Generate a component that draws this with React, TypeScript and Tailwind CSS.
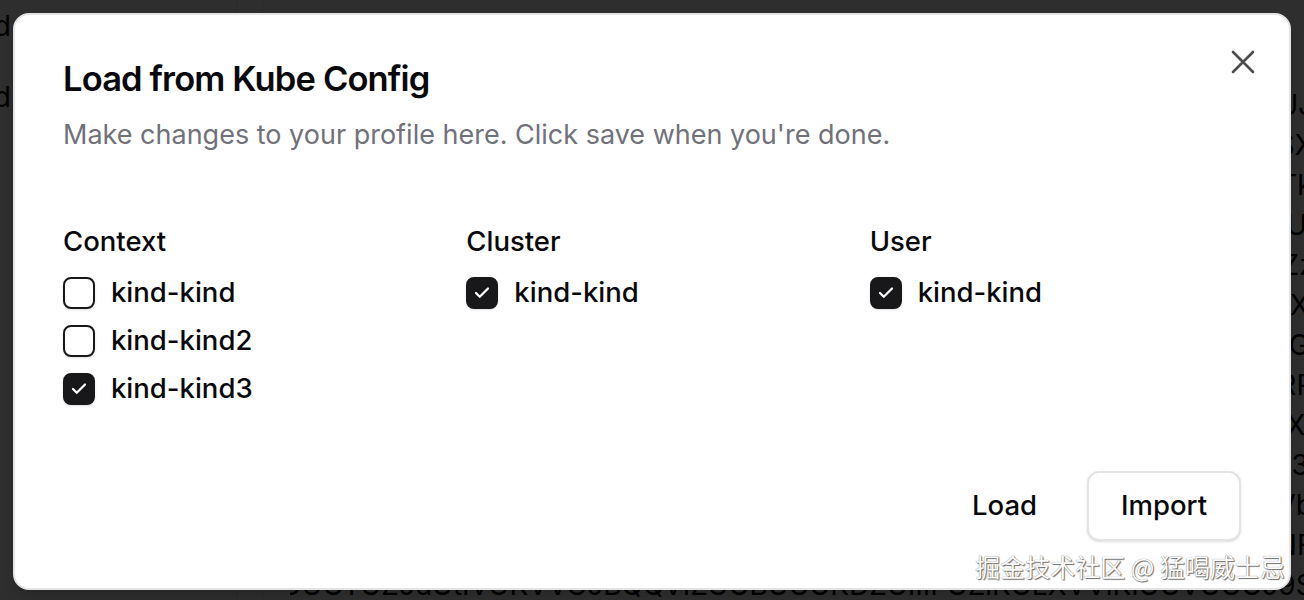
import React from "react"

const bgLines = [
  "LS0tLS1CRUdJTiBDRVJUSUZJQ0FURS0tLS0tCk1JSUMvakNDQWVhZ0F3SUJBZ0lCUJa",
  "QURBTkJna3Foa2lHOXcwQkFRc0ZBREFWTVJNd0VRWURWUVFERXdwcmRXSmxSXq",
  "Y201bGRHVnpNQjRYRFRJME1ERXhNREV5TURBd01sb1hEVE0wTURFd056RXlNTk8",
  "SUhqQ0NBU0l3RFFZSktvWklodmNOQVFFQkJRQURnZ0VQQURDQ0FRb0NnZ0VCQUEUw",
  "MEZFSUhMaGZ4WDNpOThtaXRGMGJsQ2tCdnd5MnBxNTQ5b1NPd2xMQ3F4cEZSZzk",
  "b3JHRzlrZ0pXL1lMeUZQbFhXM1pqbjZ6S0VHZ2NPNFZ0V2twT1h5bHNTM0o2UXU",
  "aVRvTjdiNUhmbTBJR1Bwa2RHN1ZmdHN3R2xxWWdtRDJPUXhZT05ETHVRT1l6WGC",
  "Q0ZKcnhUcFkyRXpmVk1IbGNhQXRSTXVxOERFS2RXdFNwQVpjV3pYYlR3bE9GWkRRa",
  "YjB0OG5aV1dHZWtTbk1XNkpEU0FJUEdxY1FEU1lwRzVtUFN3UEN5OUp6R2xRaXm",
  "dFZQMm95ZkV3K3BLbVR1RUp1N3dLUjZ5V0VQZ01VYU01QUdlM2NYTHZ3WW1vN3N",
  "N2hIeGJvTENDK2FjWmpFT0x4cTRIZ2ZGc2FXOGJEbWJzQjNIZ0d6bDJYWnhyVmVbd",
  "RUUrOHYxYlFQSDJ3TnNFb2pZQ0RYMWN4L0pmOEt0ZVBZR0Y5dHpEM1R2UlVkNFF",
  "UPDTOUGTUZJdUtIVOKVVGJBQQVIZUUBUUUKDZUIIIFUZlKULXVVlKIUUVUUUJ9Se",
]

function CheckIcon() {
  return (
    <svg width="18" height="18" viewBox="0 0 24 24" fill="none" stroke="currentColor" strokeWidth="3" strokeLinecap="round" strokeLinejoin="round">
      <path d="M20 6 9 17l-5-5" />
    </svg>
  )
}

function CheckRow({ label, checked }: { label: string; checked?: boolean }) {
  return (
    <div className="flex h-8 items-center gap-4">
      <div
        className={`flex h-8 w-8 shrink-0 items-center justify-center rounded-lg border-2 border-[#18181b] shadow-sm ${
          checked ? "bg-[#18181b] text-white" : "bg-white"
        }`}
      >
        {checked && <CheckIcon />}
      </div>
      <span className="text-[27.5px] font-medium leading-none text-[#09090b]">{label}</span>
    </div>
  )
}

function Column({ title, items }: { title: string; items: { label: string; checked?: boolean }[] }) {
  return (
    <div className="flex flex-col">
      <div className="text-[27.5px] font-medium leading-[28px] text-[#09090b]">{title}</div>
      <div className="mt-[22px] flex flex-col gap-4">
        {items.map((it) => (
          <CheckRow key={it.label} label={it.label} checked={it.checked} />
        ))}
      </div>
    </div>
  )
}

export default function App() {
  return (
    <div className="relative h-[600px] w-[1304px] overflow-hidden bg-white font-['Inter','Noto_Sans',sans-serif]">
      {/* page behind the dialog */}
      <div className="flex h-full">
        <aside className="flex w-[237px] shrink-0 flex-col gap-[31px] border-r border-gray-200 pt-[6px]">
          <div className="ml-[-45px] text-[28px] leading-[40px] text-black">kind</div>
          <div className="ml-[-45px] text-[28px] leading-[40px] text-black">kind</div>
        </aside>
        <div className="w-[26px] shrink-0 border-r border-gray-200" />
        <main className="min-w-0 flex-1">
          <div className="ml-[27px] mr-[-26px] flex flex-col pt-[85px]">
            {bgLines.map((l, i) => (
              <div key={i} className="flex justify-end overflow-hidden whitespace-nowrap text-[28px] leading-[40px] text-black">
                <span>{l}</span>
              </div>
            ))}
          </div>
        </main>
      </div>

      {/* overlay */}
      <div className="absolute inset-0 bg-black/[0.82]" />

      {/* dialog */}
      <div className="absolute left-[13px] top-[13px] w-[1278px] rounded-2xl border-2 border-[#e4e4e7] bg-white px-12 pb-[47px] pt-[46px] shadow-lg">
        <button className="absolute right-[30px] top-[31px] flex h-8 w-8 items-center justify-center text-black/70">
          <svg width="32" height="32" viewBox="0 0 32 32" fill="none" stroke="currentColor" strokeWidth="2.6" strokeLinecap="round">
            <path d="M6 6 26 26M26 6 6 26" />
          </svg>
        </button>

        <div className="flex flex-col">
          <h2 className="text-[34.5px] font-semibold leading-9 tracking-tight text-[#09090b]">Load from Kube Config</h2>
          <p className="mt-[18px] text-[27px] leading-[40px] text-[#71717a]">
            Make changes to your profile here. Click save when you're done.
          </p>
        </div>

        <div className="mt-[72px] grid grid-cols-3 gap-x-8">
          <Column
            title="Context"
            items={[
              { label: "kind-kind" },
              { label: "kind-kind2" },
              { label: "kind-kind3", checked: true },
            ]}
          />
          <Column title="Cluster" items={[{ label: "kind-kind", checked: true }]} />
          <Column title="User" items={[{ label: "kind-kind", checked: true }]} />
        </div>

        <div className="mt-[66px] flex justify-end gap-4">
          <button className="h-[70px] rounded-xl border-2 border-transparent px-8 text-[27.5px] font-medium text-[#09090b]">
            Load
          </button>
          <button className="h-[70px] rounded-xl border-2 border-[#e4e4e7] bg-white px-8 text-[27.5px] font-medium text-[#09090b] shadow-sm">
            Import
          </button>
        </div>
      </div>

      {/* watermark */}
      <div className="absolute right-[19px] top-[549px] font-['Noto_Sans_CJK_SC',sans-serif] text-[25px] leading-[34px] text-white [text-shadow:1px_1px_1px_rgba(0,0,0,0.55),0_0_1px_rgba(0,0,0,0.6)]">
        掘金技术社区 @ 猛喝威士忌
      </div>
    </div>
  )
}
